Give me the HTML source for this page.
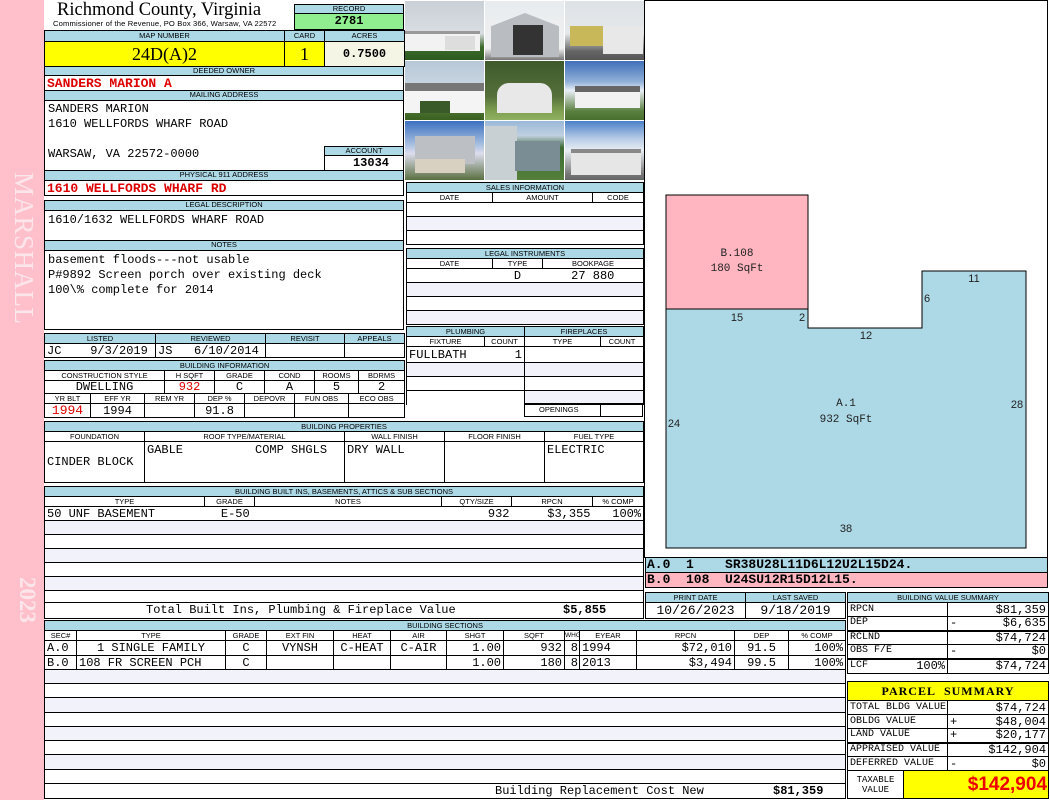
<!DOCTYPE html>
<html><head><meta charset="utf-8"><style>
*{margin:0;padding:0;box-sizing:border-box}
body{width:1050px;height:800px;position:relative;background:#fff;overflow:hidden;font-family:"Liberation Mono",monospace}
.a{position:absolute}
.bx{position:absolute;border:1px solid #000}
.h{position:absolute;background:#add8e6;border:1px solid #000;font:7.5px "Liberation Sans",sans-serif;text-align:center;line-height:8px;color:#000;white-space:nowrap;overflow:hidden}
table.t{position:absolute;border-collapse:collapse;table-layout:fixed}
table.t td{border:1px solid #000;padding:0 2px;font:12px "Liberation Mono",monospace;white-space:nowrap;overflow:hidden;line-height:12px}
table.t td.h2{background:#add8e6;font:7.5px "Liberation Sans",sans-serif;text-align:center;line-height:8px;padding:0}
.r{text-align:right}.c{text-align:center}
.red{color:#d00;font-weight:bold}
tr.l td{background:#f2f2fb}
.ph{position:absolute;width:79px;height:59px;overflow:hidden}
.ph div{position:absolute}
.tx{position:absolute;font:12px "Liberation Mono",monospace;white-space:pre;line-height:13px}
</style></head><body>
<div class="a" style="left:0;top:0;width:44px;height:800px;background:#ffc0cb"></div>
<div class="a" style="left:7px;top:172px;width:32px;height:165px;font:27px 'Liberation Serif',serif;color:#fce6ec;writing-mode:vertical-rl;letter-spacing:0.5px">MARSHALL</div>
<div class="a" style="left:8px;top:577px;width:32px;height:52px;font:bold 23px 'Liberation Serif',serif;color:#fce6ec;writing-mode:vertical-rl">2023</div>

<div class="a" style="left:57px;top:0px;font:18.5px 'Liberation Serif',serif;white-space:nowrap">Richmond County, Virginia</div>
<div class="a" style="left:53px;top:19px;font:7.6px 'Liberation Sans',sans-serif;white-space:nowrap;letter-spacing:0.15px">Commissioner of the Revenue, PO Box 366, Warsaw, VA 22572</div>
<div class="h" style="left:294px;top:4px;width:110px;height:10px">RECORD</div>
<div class="a" style="left:294px;top:13px;width:110px;height:17px;background:#90ee90;border:1px solid #000;font:bold 12px 'Liberation Mono';text-align:center;line-height:15px">2781</div>

<table class="t" style="left:44px;top:30px;width:360px">
<col style="width:240px"><col style="width:40px"><col style="width:80px">
<tr style="height:11px"><td class="h2">MAP NUMBER</td><td class="h2">CARD</td><td class="h2">ACRES</td></tr>
<tr style="height:25px"><td class="c" style="background:#ff0;font:18px 'Liberation Serif',serif">24D(A)2</td><td class="c" style="background:#ff0;font:18px 'Liberation Serif',serif">1</td><td class="c" style="background:#f5f5e6;font:bold 12px 'Liberation Mono'">0.7500</td></tr>
</table>

<div class="h" style="left:44px;top:66px;width:360px;height:10px">DEEDED OWNER</div>
<div class="bx" style="left:44px;top:75px;width:360px;height:16px;font:bold 13px 'Liberation Mono';color:#d00;padding-left:2px;line-height:15px">SANDERS MARION A</div>
<div class="h" style="left:44px;top:90px;width:360px;height:11px">MAILING ADDRESS</div>
<div class="bx" style="left:44px;top:100px;width:360px;height:71px;font:12px 'Liberation Mono';padding:1px 3px;line-height:15px;white-space:pre">SANDERS MARION
1610 WELLFORDS WHARF ROAD

WARSAW, VA 22572-0000</div>
<div class="h" style="left:324px;top:146px;width:80px;height:10px">ACCOUNT</div>
<div class="bx" style="left:324px;top:155px;width:80px;height:16px;font:bold 12px 'Liberation Mono';text-align:right;padding-right:14px;line-height:15px">13034</div>
<div class="h" style="left:44px;top:170px;width:360px;height:11px">PHYSICAL 911 ADDRESS</div>
<div class="bx" style="left:44px;top:180px;width:360px;height:16px;font:bold 13px 'Liberation Mono';color:#d00;padding-left:2px;line-height:15px">1610 WELLFORDS WHARF RD</div>

<div class="h" style="left:44px;top:200px;width:360px;height:11px">LEGAL DESCRIPTION</div>
<div class="bx" style="left:44px;top:210px;width:360px;height:31px;font:12px 'Liberation Mono';padding:2px 3px;line-height:14px">1610/1632 WELLFORDS WHARF ROAD</div>
<div class="h" style="left:44px;top:240px;width:360px;height:11px">NOTES</div>
<div class="bx" style="left:44px;top:250px;width:360px;height:80px;font:12px 'Liberation Mono';padding:2px 3px;line-height:15px;white-space:pre">basement floods---not usable
P#9892 Screen porch over existing deck
100\% complete for 2014</div>

<div class="ph" style="left:405px;top:1px;background:linear-gradient(#c9d0d6 0,#d8dde2 55%,#3d6b2a 78%,#2d5a20 100%)"><div style="left:0;top:30px;width:75px;height:20px;background:#f2f2f2;border-top:3px solid #999"></div><div style="left:40px;top:35px;width:30px;height:14px;background:#ddd"></div></div>
<div class="ph" style="left:485px;top:1px;background:linear-gradient(#e8ecef 0,#f0f0f0 80%,#777 100%)"><div style="left:6px;top:12px;width:68px;height:44px;background:#b9bcc0;clip-path:polygon(0 30%,50% 0,100% 30%,100% 100%,0 100%)"></div><div style="left:28px;top:24px;width:30px;height:30px;background:#333"></div></div>
<div class="ph" style="left:565px;top:1px;background:linear-gradient(#dde2e6 0,#e5e8ea 55%,#666 85%,#555 100%)"><div style="left:5px;top:25px;width:40px;height:20px;background:#c8b85a"></div><div style="left:38px;top:25px;width:40px;height:28px;background:#e8e8e8"></div></div>
<div class="ph" style="left:405px;top:61px;background:linear-gradient(#b8c8d8 0,#c9d6e2 45%,#4a7030 85%,#3a6020 100%)"><div style="left:0;top:22px;width:79px;height:30px;background:#f4f4f4;border-top:8px solid #777"></div><div style="left:15px;top:40px;width:30px;height:12px;background:#3a5a2a"></div></div>
<div class="ph" style="left:485px;top:61px;background:linear-gradient(#3e5a2c 0,#55703a 60%,#7fa050 85%,#8fb060 100%)"><div style="left:12px;top:22px;width:55px;height:30px;background:#e8e8e8;border-radius:12px 12px 0 0"></div></div>
<div class="ph" style="left:565px;top:61px;background:linear-gradient(#4070b8 0,#90b0d8 35%,#e8eef5 50%,#5a8040 85%,#4a7030 100%)"><div style="left:10px;top:25px;width:65px;height:22px;background:#f2f2f2;border-top:6px solid #666"></div></div>
<div class="ph" style="left:405px;top:121px;background:linear-gradient(#3a70c0 0,#a8c0e0 40%,#dde 55%,#5a7040 100%)"><div style="left:10px;top:15px;width:60px;height:28px;background:#bcc0c4"></div><div style="left:10px;top:38px;width:50px;height:14px;background:#d8d0c0"></div></div>
<div class="ph" style="left:485px;top:121px;background:linear-gradient(#9ab8d8 0,#c0d0e0 25%,#3c6a34 45%,#55803a 100%)"><div style="left:0;top:5px;width:32px;height:54px;background:#c8d0d4"></div><div style="left:30px;top:20px;width:45px;height:30px;background:#7a8c94"></div></div>
<div class="ph" style="left:565px;top:121px;background:linear-gradient(#4a80c8 0,#b8cce6 30%,#e8eef4 50%,#777 90%,#666 100%)"><div style="left:6px;top:28px;width:70px;height:26px;background:#e6e6e6;border-top:4px solid #888"></div></div>

<table class="t" style="left:406px;top:182px;width:237px">
<col style="width:86px"><col style="width:100px"><col style="width:51px">
<tr style="height:10px"><td class="h2" colspan="3">SALES INFORMATION</td></tr>
<tr style="height:10px"><td class="h2" style="background:#fff">DATE</td><td class="h2" style="background:#fff">AMOUNT</td><td class="h2" style="background:#fff">CODE</td></tr>
<tr style="height:14px"><td colspan="3"></td></tr>
<tr class="l" style="height:14px"><td colspan="3"></td></tr>
<tr style="height:14px"><td colspan="3"></td></tr>
</table>
<table class="t" style="left:406px;top:248px;width:237px">
<col style="width:86px"><col style="width:50px"><col style="width:101px">
<tr style="height:10px"><td class="h2" colspan="3">LEGAL INSTRUMENTS</td></tr>
<tr style="height:10px"><td class="h2" style="background:#fff">DATE</td><td class="h2" style="background:#fff">TYPE</td><td class="h2" style="background:#fff">BOOKPAGE</td></tr>
<tr style="height:14px"><td style="border-right:none"></td><td class="c" style="border:none;border-bottom:1px solid #000">D</td><td class="c" style="border-left:none">27 880</td></tr>
<tr class="l" style="height:14px"><td colspan="3"></td></tr>
<tr style="height:14px"><td colspan="3"></td></tr>
<tr class="l" style="height:14px"><td colspan="3"></td></tr>
</table>

<table class="t" style="left:44px;top:333px;width:360px">
<col style="width:111px"><col style="width:110px"><col style="width:79px"><col style="width:60px">
<tr style="height:10px"><td class="h2">LISTED</td><td class="h2">REVIEWED</td><td class="h2">REVISIT</td><td class="h2">APPEALS</td></tr>
<tr style="height:14px"><td>JC&nbsp;&nbsp;&nbsp;&nbsp;9/3/2019</td><td>JS&nbsp;&nbsp;&nbsp;6/10/2014</td><td></td><td></td></tr>
</table>
<table class="t" style="left:44px;top:360px;width:360px">
<col style="width:46px"><col style="width:54px"><col style="width:20px"><col style="width:30px"><col style="width:20px"><col style="width:30px"><col style="width:20px"><col style="width:30px"><col style="width:20px"><col style="width:34px"><col style="width:10px"><col style="width:46px">
<tr style="height:10px"><td class="h2" colspan="12">BUILDING INFORMATION</td></tr>
<tr style="height:10px"><td class="h2" colspan="3" style="background:#fff">CONSTRUCTION STYLE</td><td class="h2" colspan="2" style="background:#fff">H SQFT</td><td class="h2" colspan="2" style="background:#fff">GRADE</td><td class="h2" colspan="2" style="background:#fff">COND</td><td class="h2" colspan="2" style="background:#fff">ROOMS</td><td class="h2" style="background:#fff">BDRMS</td></tr>
<tr style="height:13px"><td colspan="3" class="c">DWELLING</td><td colspan="2" class="c red">932</td><td colspan="2" class="c">C</td><td colspan="2" class="c">A</td><td colspan="2" class="c">5</td><td class="c">2</td></tr>
<tr style="height:10px"><td class="h2" style="background:#fff">YR BLT</td><td class="h2" style="background:#fff">EFF YR</td><td class="h2" colspan="2" style="background:#fff">REM YR</td><td class="h2" colspan="2" style="background:#fff">DEP %</td><td class="h2" colspan="2" style="background:#fff">DEPOVR</td><td class="h2" colspan="2" style="background:#fff">FUN OBS</td><td class="h2" colspan="2" style="background:#fff">ECO OBS</td></tr>
<tr style="height:14px"><td class="c red" style="font-size:13px">1994</td><td class="c">1994</td><td colspan="2"></td><td colspan="2" class="c">91.8</td><td colspan="2"></td><td colspan="2"></td><td colspan="2"></td></tr>
</table>

<table class="t" style="left:406px;top:326px;width:237px">
<col style="width:78px"><col style="width:40px"><col style="width:76px"><col style="width:43px">
<tr style="height:10px"><td class="h2" colspan="2">PLUMBING</td><td class="h2" colspan="2">FIREPLACES</td></tr>
<tr style="height:10px"><td class="h2" style="background:#fff">FIXTURE</td><td class="h2" style="background:#fff">COUNT</td><td class="h2" style="background:#fff">TYPE</td><td class="h2" style="background:#fff">COUNT</td></tr>
<tr style="height:16px"><td style="border-right:none">FULLBATH</td><td class="r" style="border-left:none">1</td><td colspan="2"></td></tr>
<tr class="l" style="height:14px"><td colspan="2"></td><td colspan="2"></td></tr>
<tr style="height:14px"><td colspan="2"></td><td colspan="2"></td></tr>
<tr class="l" style="height:14px"><td colspan="2" style="border-bottom:none;background:#fff"></td><td colspan="2"></td></tr>
</table>
<div class="bx" style="left:524px;top:403px;width:119px;height:14px;font:7.5px 'Liberation Sans';line-height:12px"><span style="position:absolute;left:14px">OPENINGS</span><span style="position:absolute;left:75px;top:-1px;height:14px;border-left:1px solid #000"></span></div>

<table class="t" style="left:44px;top:421px;width:599px">
<col style="width:100px"><col style="width:200px"><col style="width:100px"><col style="width:100px"><col style="width:99px">
<tr style="height:10px"><td class="h2" colspan="5">BUILDING PROPERTIES</td></tr>
<tr style="height:10px"><td class="h2" style="background:#fff">FOUNDATION</td><td class="h2" style="background:#fff">ROOF TYPE/MATERIAL</td><td class="h2" style="background:#fff">WALL FINISH</td><td class="h2" style="background:#fff">FLOOR FINISH</td><td class="h2" style="background:#fff">FUEL TYPE</td></tr>
<tr style="height:41px"><td style="vertical-align:middle">CINDER BLOCK</td><td style="vertical-align:top;padding-top:2px">GABLE&nbsp;&nbsp;&nbsp;&nbsp;&nbsp;&nbsp;&nbsp;&nbsp;&nbsp;&nbsp;COMP SHGLS</td><td style="vertical-align:top;padding-top:2px">DRY WALL</td><td></td><td style="vertical-align:top;padding-top:2px">ELECTRIC</td></tr>
</table>

<table class="t" style="left:44px;top:486px;width:599px">
<col style="width:160px"><col style="width:50px"><col style="width:187px"><col style="width:70px"><col style="width:81px"><col style="width:51px">
<tr style="height:10px"><td class="h2" colspan="6">BUILDING BUILT INS, BASEMENTS, ATTICS &amp; SUB SECTIONS</td></tr>
<tr style="height:10px"><td class="h2" style="background:#fff">TYPE</td><td class="h2" style="background:#fff">GRADE</td><td class="h2" style="background:#fff">NOTES</td><td class="h2" style="background:#fff">QTY/SIZE</td><td class="h2" style="background:#fff">RPCN</td><td class="h2" style="background:#fff">% COMP</td></tr>
<tr style="height:14px"><td style="border-right:none">50 UNF BASEMENT</td><td style="border:none;border-bottom:1px solid #000" colspan="2">&nbsp;&nbsp;E-50</td><td class="r" style="border:none;border-bottom:1px solid #000">932</td><td class="r" style="border:none;border-bottom:1px solid #000">$3,355</td><td class="r" style="border-left:none">100%</td></tr>
<tr class="l" style="height:14px"><td colspan="6"></td></tr>
<tr style="height:14px"><td colspan="6"></td></tr>
<tr class="l" style="height:14px"><td colspan="6"></td></tr>
<tr style="height:14px"><td colspan="6"></td></tr>
<tr class="l" style="height:14px"><td colspan="6"></td></tr>
<tr style="height:12px"><td colspan="6"></td></tr>
<tr style="height:16px"><td colspan="6"></td></tr>
</table>
<div class="tx" style="left:146px;top:604px">Total Built Ins, Plumbing &amp; Fireplace Value</div>
<div class="tx" style="left:563px;top:604px;font-weight:bold">$5,855</div>

<table class="t" style="left:645px;top:592px;width:200px">
<col style="width:100px"><col style="width:100px">
<tr style="height:10px"><td class="h2">PRINT DATE</td><td class="h2">LAST SAVED</td></tr>
<tr style="height:16px"><td class="c" style="font-size:13px">10/26/2023</td><td class="c" style="font-size:13px">9/18/2019</td></tr>
</table>

<table class="t" style="left:44px;top:620px;width:801px">
<col style="width:32px"><col style="width:149px"><col style="width:41px"><col style="width:67px"><col style="width:57px"><col style="width:56px"><col style="width:57px"><col style="width:61px"><col style="width:15px"><col style="width:57px"><col style="width:98px"><col style="width:54px"><col style="width:57px">
<tr style="height:10px"><td class="h2" colspan="13">BUILDING SECTIONS</td></tr>
<tr style="height:10px"><td class="h2" style="background:#fff">SEC#</td><td class="h2" style="background:#fff">TYPE</td><td class="h2" style="background:#fff">GRADE</td><td class="h2" style="background:#fff">EXT FIN</td><td class="h2" style="background:#fff">HEAT</td><td class="h2" style="background:#fff">AIR</td><td class="h2" style="background:#fff">SHGT</td><td class="h2" style="background:#fff">SQFT</td><td class="h2" style="background:#fff;font-size:6.5px">WHGT</td><td class="h2" style="background:#fff">EYEAR</td><td class="h2" style="background:#fff">RPCN</td><td class="h2" style="background:#fff">DEP</td><td class="h2" style="background:#fff">% COMP</td></tr>
<tr style="height:15px"><td>A.0</td><td class="c">1 SINGLE FAMILY</td><td class="c">C</td><td class="c">VYNSH</td><td class="c">C-HEAT</td><td class="c">C-AIR</td><td class="r">1.00</td><td class="r">932</td><td class="r" style="padding:0 1px">8</td><td>1994</td><td class="r">$72,010</td><td class="c">91.5</td><td class="r">100%</td></tr>
<tr style="height:14px"><td>B.0</td><td>108 FR SCREEN PCH</td><td class="c">C</td><td></td><td></td><td></td><td class="r">1.00</td><td class="r">180</td><td class="r" style="padding:0 1px">8</td><td>2013</td><td class="r">$3,494</td><td class="c">99.5</td><td class="r">100%</td></tr>
<tr class="l" style="height:14px"><td colspan="13"></td></tr>
<tr style="height:14px"><td colspan="13"></td></tr>
<tr class="l" style="height:15px"><td colspan="13"></td></tr>
<tr style="height:14px"><td colspan="13"></td></tr>
<tr class="l" style="height:14px"><td colspan="13"></td></tr>
<tr style="height:14px"><td colspan="13"></td></tr>
<tr class="l" style="height:15px"><td colspan="13"></td></tr>
<tr style="height:14px"><td colspan="13"></td></tr>
<tr style="height:15px"><td colspan="13"></td></tr>
</table>
<div class="tx" style="left:495px;top:785px">Building Replacement Cost New</div>
<div class="tx" style="left:773px;top:785px;font-weight:bold">$81,359</div>

<div class="bx" style="left:644px;top:0;width:404px;height:558px"></div>
<svg class="a" style="left:0;top:0" width="1050" height="560">
<rect x="666" y="195" width="142" height="114" fill="#ffb6c1" stroke="#000" stroke-width="1"/>
<polygon points="666,309 808,309 808,328 922,328 922,271 1026,271 1026,548 666,548" fill="#add8e6" stroke="#000" stroke-width="1"/>
<g font-family="Liberation Mono,monospace" font-size="11" text-anchor="middle" fill="#222">
<text x="737" y="256">B.108</text><text x="737" y="271">180 SqFt</text>
<text x="846" y="406">A.1</text><text x="846" y="422">932 SqFt</text></g>
<g font-family="Liberation Sans,sans-serif" font-size="11" fill="#222" text-anchor="middle">
<text x="737" y="321">15</text><text x="802" y="321">2</text><text x="866" y="339">12</text>
<text x="927" y="302">6</text><text x="974" y="282">11</text><text x="674" y="427">24</text>
<text x="1017" y="408">28</text><text x="846" y="532">38</text></g>
</svg>
<div class="a" style="left:645px;top:558px;width:403px;height:15px;background:#add8e6;border:1px solid #000;border-top:none;font:bold 13px 'Liberation Mono';line-height:14px;padding-left:1px;white-space:pre">A.0  1    SR38U28L11D6L12U2L15D24.</div>
<div class="a" style="left:645px;top:572px;width:403px;height:16px;background:#ffb6c1;border:1px solid #000;font:bold 13px 'Liberation Mono';line-height:14px;padding-left:1px;white-space:pre">B.0  108  U24SU12R15D12L15.</div>

<table class="t" style="left:847px;top:592px;width:201px">
<col style="width:100px"><col style="width:101px">
<tr style="height:10px"><td class="h2" colspan="2">BUILDING VALUE SUMMARY</td></tr>
<tr style="height:14px"><td style="font-size:10px">RPCN</td><td class="r">$81,359</td></tr>
<tr style="height:14px"><td style="font-size:10px">DEP</td><td class="r"><span style="float:left">-</span>$6,635</td></tr>
<tr style="height:14px"><td style="font-size:10px;border-top:2px solid #000">RCLND</td><td class="r" style="border-top:2px solid #000">$74,724</td></tr>
<tr style="height:14px"><td style="font-size:10px">OBS F/E</td><td class="r"><span style="float:left">-</span>$0</td></tr>
<tr style="height:15px"><td style="font-size:10px;border-top:2px solid #000">LCF<span style="float:right;font-size:12px">100%</span></td><td class="r" style="border-top:2px solid #000">$74,724</td></tr>
</table>

<table class="t" style="left:847px;top:681px;width:201px">
<col style="width:56px"><col style="width:44px"><col style="width:101px">
<tr style="height:19px"><td colspan="3" class="c" style="background:#ff0;font:bold 12px 'Liberation Serif',serif;letter-spacing:1px">PARCEL&nbsp; SUMMARY</td></tr>
<tr style="height:14px"><td colspan="2" style="font-size:10px">TOTAL BLDG VALUE</td><td class="r">$74,724</td></tr>
<tr style="height:14px"><td colspan="2" style="font-size:10px">OBLDG VALUE</td><td class="r"><span style="float:left">+</span>$48,004</td></tr>
<tr style="height:14px"><td colspan="2" style="font-size:10px">LAND VALUE</td><td class="r"><span style="float:left">+</span>$20,177</td></tr>
<tr style="height:14px"><td colspan="2" style="font-size:10px;border-top:2px solid #000">APPRAISED VALUE</td><td class="r" style="border-top:2px solid #000">$142,904</td></tr>
<tr style="height:14px"><td colspan="2" style="font-size:10px">DEFERRED VALUE</td><td class="r"><span style="float:left">-</span>$0</td></tr>
<tr style="height:28px"><td class="c" style="font-size:9px;line-height:10px">TAXABLE<br>VALUE</td><td colspan="2" class="r" style="background:#ff0;color:#e00;font:bold 19px 'Liberation Sans',sans-serif;padding-right:1px">$142,904</td></tr>
</table>
</body></html>
